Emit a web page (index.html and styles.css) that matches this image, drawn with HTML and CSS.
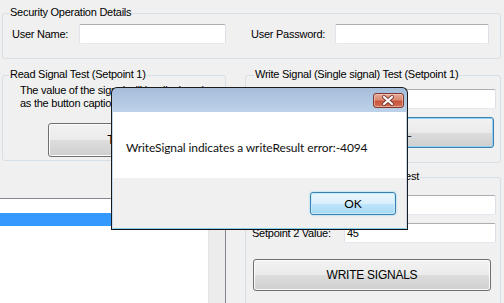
FILE: index.html
```html
<!DOCTYPE html>
<html lang="en">
<head>
    <meta charset="UTF-8">
    <meta name="viewport" content="width=device-width, initial-scale=1.0">
    <title>Signal Test</title>
    <link rel="stylesheet" href="styles.css">
</head>
<body>
    <div class="form">
        <div class="group group-security">
            <div class="group-title">Security Operation Details</div>
            <div class="login-row">
                <label class="name-label" for="userName">User Name:</label>
                <input class="textbox name-box" type="text" id="userName">
                <label class="pass-label" for="userPassword">User Password:</label>
                <input class="textbox pass-box" type="password" id="userPassword">
            </div>
        </div>

        <div class="columns">
            <div class="column">
                <div class="group group-read">
                    <div class="group-title">Read Signal Test (Setpoint 1)</div>
                    <p class="hint">The value of the signal will be displayed<br>as the button caption after reading.</p>
                    <button class="win-button read-button">TEST</button>
                </div>
                <div class="listbox">
                    <div class="list-items">
                        <div class="list-item"></div>
                        <div class="list-item selected"></div>
                    </div>
                    <div class="scrollbar"></div>
                </div>
            </div>

            <div class="column">
                <div class="group group-write">
                    <div class="group-title title-wide">Write Signal (Single signal) Test (Setpoint 1)</div>
                    <div class="field-row first-field">
                        <label for="singleValue">Setpoint 1 Value:</label>
                        <input class="textbox value-box" type="text" id="singleValue">
                    </div>
                    <button class="win-button focused write-button">WRITE SIGNAL</button>
                </div>
                <div class="group group-multi">
                    <div class="group-title title-wide">Write Signals (Multiple signals) Test</div>
                    <div class="field-row first-field">
                        <label for="setpoint1">Setpoint 1 Value:</label>
                        <input class="textbox value-box" type="text" id="setpoint1" value="30">
                    </div>
                    <div class="field-row second-field">
                        <label for="setpoint2">Setpoint 2 Value:</label>
                        <input class="textbox value-box" type="text" id="setpoint2" value="45">
                    </div>
                    <button class="win-button signals-button">WRITE SIGNALS</button>
                </div>
            </div>
        </div>
    </div>

    <div class="dialog">
        <div class="dialog-titlebar">
            <div class="close-button">
                <svg width="29" height="13" viewBox="0 0 29 13">
                    <path d="M10 3 L18 10 M18 3 L10 10" stroke="#6e3a30" stroke-width="3.8" stroke-linecap="round"/>
                    <path d="M10 3 L18 10 M18 3 L10 10" stroke="#ffffff" stroke-width="2.2" stroke-linecap="round"/>
                </svg>
            </div>
        </div>
        <div class="dialog-client">
            <div class="dialog-message">WriteSignal indicates a writeResult error:-4094</div>
            <div class="dialog-footer">
                <button class="ok-button">OK</button>
            </div>
        </div>
    </div>
</body>
</html>
```

FILE: styles.css
```css
* {
    box-sizing: border-box;
}

body {
    margin: 0;
    width: 504px;
    height: 303px;
    overflow: hidden;
    position: relative;
    background: #f0f0f0;
    font-family: "Liberation Sans", Arial, sans-serif;
    font-size: 11px;
    letter-spacing: -0.25px;
    color: #000;
}

.form {
    padding-left: 2px;
    width: 501px;
}

/* group boxes */
.group {
    border: 1px solid #d5dfe5;
    border-radius: 3px;
}

.group-title {
    display: table;
    margin: -9px 0 0 6px;
    padding: 0 1px;
    line-height: 14px;
    background: #f0f0f0;
}

.title-wide {
    margin-left: 8px;
}

.group-security {
    margin-top: 13px;
    padding-bottom: 14px;
}

.login-row {
    display: flex;
    align-items: center;
    margin-top: 5px;
    padding-left: 9px;
}

.name-label {
    width: 67px;
}

.pass-label {
    width: 84px;
    margin-left: 25px;
}

.textbox {
    height: 20px;
    margin: 0;
    padding: 0 2px;
    border: 1px solid;
    border-color: #abadb3 #dbdfe6 #e3e9ef #e2e3ea;
    border-radius: 2px;
    background: #fff;
    font: inherit;
    letter-spacing: inherit;
}

.name-box {
    width: 147px;
}

.pass-box {
    width: 154px;
}

.columns {
    display: grid;
    grid-template-columns: 224px 256px;
    column-gap: 19px;
    align-items: start;
    margin-top: 16px;
}

.group-read {
    padding-bottom: 3px;
}

.hint {
    margin: 3px 0 0 17px;
    line-height: 13px;
}

.win-button {
    display: block;
    padding: 0;
    border: 1px solid #707070;
    border-radius: 3px;
    background: linear-gradient(#f2f2f2 0%, #ebebeb 50%, #dddddd 51%, #cfcfcf 100%);
    box-shadow: inset 0 0 0 1px #fbfbfb;
    font: inherit;
    letter-spacing: inherit;
    color: #000;
}

.win-button.focused {
    border-color: #3c7fb1;
    box-shadow: inset 0 0 0 1px #8ed3f2;
}

.read-button {
    width: 148px;
    height: 34px;
    margin: 13px 0 0 45px;
    font-size: 12px;
}

.listbox {
    display: flex;
    width: 227px;
    height: 120px;
    margin: 37px 0 0 -3px;
    border: 1px solid #828790;
    background: #fff;
}

.list-items {
    flex: 1;
}

.list-item {
    height: 14px;
}

.list-item.selected {
    height: 13px;
    background: #3399ff;
}

.scrollbar {
    width: 17px;
    background: #ececec;
    border-left: 1px solid #e3e3e3;
}

.group-write {
    padding-bottom: 14px;
}

.group-multi {
    margin-top: 14px;
    height: 140px;
}

.field-row {
    display: flex;
    align-items: center;
    padding-left: 6px;
}

.field-row label {
    width: 92px;
}

.first-field {
    margin-top: 8px;
}

.group-multi .first-field {
    margin-top: 12px;
}

.second-field {
    margin-top: 8px;
}

.value-box {
    width: 152px;
}

.write-button {
    width: 241px;
    height: 31px;
    margin: 8px 0 0 7px;
}

.signals-button {
    width: 238px;
    height: 32px;
    margin: 16px 0 0 7px;
    font-size: 12px;
}

/* message box */
.dialog {
    position: absolute;
    left: 111px;
    top: 87px;
    width: 297px;
    height: 143px;
    padding: 0 1px;
    border: 1px solid #1b1b1b;
    border-bottom-color: #111;
    border-radius: 6px 6px 0 0;
    background: linear-gradient(#a6bedb, #bdd2ea 24px, #cadcef);
    font-family: Lato, "Liberation Sans", sans-serif;
    font-size: 12px;
    letter-spacing: 0;
}

.dialog-titlebar {
    display: flex;
    justify-content: flex-end;
    height: 24px;
    padding: 5px 2px 0 0;
}

.close-button {
    width: 31px;
    height: 15px;
    border: 1px solid #7a3a30;
    border-radius: 3px;
    background: linear-gradient(#e6a896 0%, #d98a74 45%, #c8533b 55%, #d26f55 100%);
    box-shadow: inset 0 0 0 1px rgba(255, 220, 210, 0.5);
}

.close-button svg {
    display: block;
}

.dialog-client {
    border-bottom: 1px solid #86cfe9;
    background: #f0f0f0;
}

.dialog-message {
    display: flex;
    align-items: center;
    height: 66px;
    padding: 4px 0 0 13px;
    background: #fff;
    letter-spacing: -0.1px;
    color: #111;
}

.dialog-footer {
    display: flex;
    justify-content: flex-end;
    height: 50px;
    padding: 14px 10px 0 0;
}

.ok-button {
    width: 86px;
    height: 23px;
    padding: 0;
    border: 1px solid #3c7fb1;
    border-radius: 3px;
    background: linear-gradient(#eaf6fd 0%, #d9f0fc 50%, #bee6fd 51%, #a7d9f5 100%);
    box-shadow: inset 0 0 0 1px #c4ecfb, 0 0 2px #6fcbee;
    font: inherit;
    color: #000;
}
```
